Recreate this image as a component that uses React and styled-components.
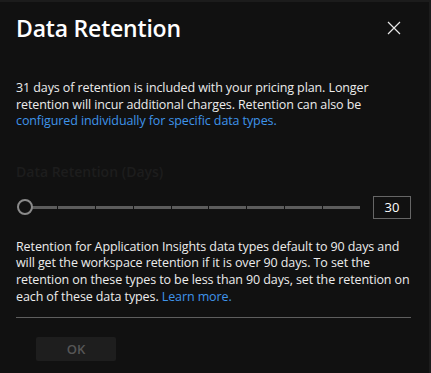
import React from "react";
import styled, { createGlobalStyle } from "styled-components";

const GlobalStyle = createGlobalStyle`
  html, body {
    margin: 0;
    padding: 0;
    background: #111111;
  }
  body {
    font-family: "Open Sans", "Noto Sans", sans-serif;
    -webkit-font-smoothing: antialiased;
  }
`;

const Panel = styled.div`
  width: 431px;
  height: 373px;
  box-sizing: border-box;
  background: #111111;
  border-top: 2px solid #1c1c1c;
  border-right: 2px solid #1c1c1c;
  padding: 0 18px 0 16px;
  color: #ececec;
  overflow: hidden;
`;

const Header = styled.div`
  display: flex;
  align-items: center;
  justify-content: space-between;
  height: 48px;
  padding-top: 2px;
`;

const Title = styled.h1`
  margin: 0;
  font-size: 23px;
  font-weight: 600;
  color: #ffffff;
  letter-spacing: -0.2px;
`;

const CloseButton = styled.button`
  background: none;
  border: none;
  padding: 0;
  margin-right: 10px;
  width: 14px;
  height: 14px;
  display: flex;
  color: #e8e8e8;
  cursor: pointer;
`;

const Text = styled.p`
  margin: ${(p) => p.$top || 0}px -4px 0 0;
  font-size: 12.5px;
  line-height: 16.6px;
  letter-spacing: -0.1px;
  color: #ececec;
`;

const Link = styled.a`
  color: #3f94ea;
  text-decoration: none;
`;

const FieldLabel = styled.div`
  margin-top: 32px;
  font-size: 14px;
  font-weight: 600;
  color: #1d1d1d;
`;

const SliderRow = styled.div`
  display: flex;
  align-items: center;
  margin-top: 15px;
  gap: 13px;
`;

const Track = styled.div`
  position: relative;
  flex: 1;
  height: 3px;
  margin-left: 4px;
  display: flex;
  gap: 1px;
`;

const Segment = styled.div`
  flex: 1;
  background: #5c5c5c;
`;

const Thumb = styled.div`
  position: absolute;
  left: -3px;
  top: 50%;
  width: 12px;
  height: 12px;
  margin-top: -8px;
  border-radius: 50%;
  border: 2px solid #8a8a8a;
  background: #111111;
`;

const ValueBox = styled.div`
  width: 38px;
  height: 23px;
  box-sizing: border-box;
  border: 1px solid #666666;
  display: flex;
  align-items: center;
  justify-content: center;
  font-size: 13px;
  color: #ffffff;
`;

const Divider = styled.hr`
  border: none;
  border-top: 1px solid #5e5e5e;
  margin: 12px 0 0;
`;

const Footer = styled.div`
  padding: 19px 0 0 20px;
`;

const OkButton = styled.button`
  width: 80px;
  height: 24px;
  border: none;
  border-radius: 2px;
  background: #1e1e1e;
  color: #565656;
  font-family: inherit;
  font-size: 13px;
  font-weight: 600;
`;

const segments = Array.from({ length: 9 });

export default function App() {
  return (
    <>
      <GlobalStyle />
      <Panel>
        <Header>
          <Title>Data Retention</Title>
          <CloseButton aria-label="Close">
            <svg width="14" height="14" viewBox="0 0 14 14">
              <path d="M1 1L13 13M13 1L1 13" stroke="currentColor" strokeWidth="1.2" />
            </svg>
          </CloseButton>
        </Header>
        <Text $top={28}>
          31 days of retention is included with your pricing plan. Longer
          retention will incur additional charges. Retention can also be{" "}
          <Link href="#">configured individually for specific data types.</Link>
        </Text>
        <FieldLabel>Data Retention (Days)</FieldLabel>
        <SliderRow>
          <Track>
            {segments.map((_, i) => (
              <Segment key={i} />
            ))}
            <Thumb />
          </Track>
          <ValueBox>30</ValueBox>
        </SliderRow>
        <Text $top={20}>
          Retention for Application Insights data types default to 90 days and
          will get the workspace retention if it is over 90 days. To set the
          retention on these types to be less than 90 days, set the retention on
          each of these data types. <Link href="#">Learn more.</Link>
        </Text>
        <Divider />
        <Footer>
          <OkButton disabled>OK</OkButton>
        </Footer>
      </Panel>
    </>
  );
}
